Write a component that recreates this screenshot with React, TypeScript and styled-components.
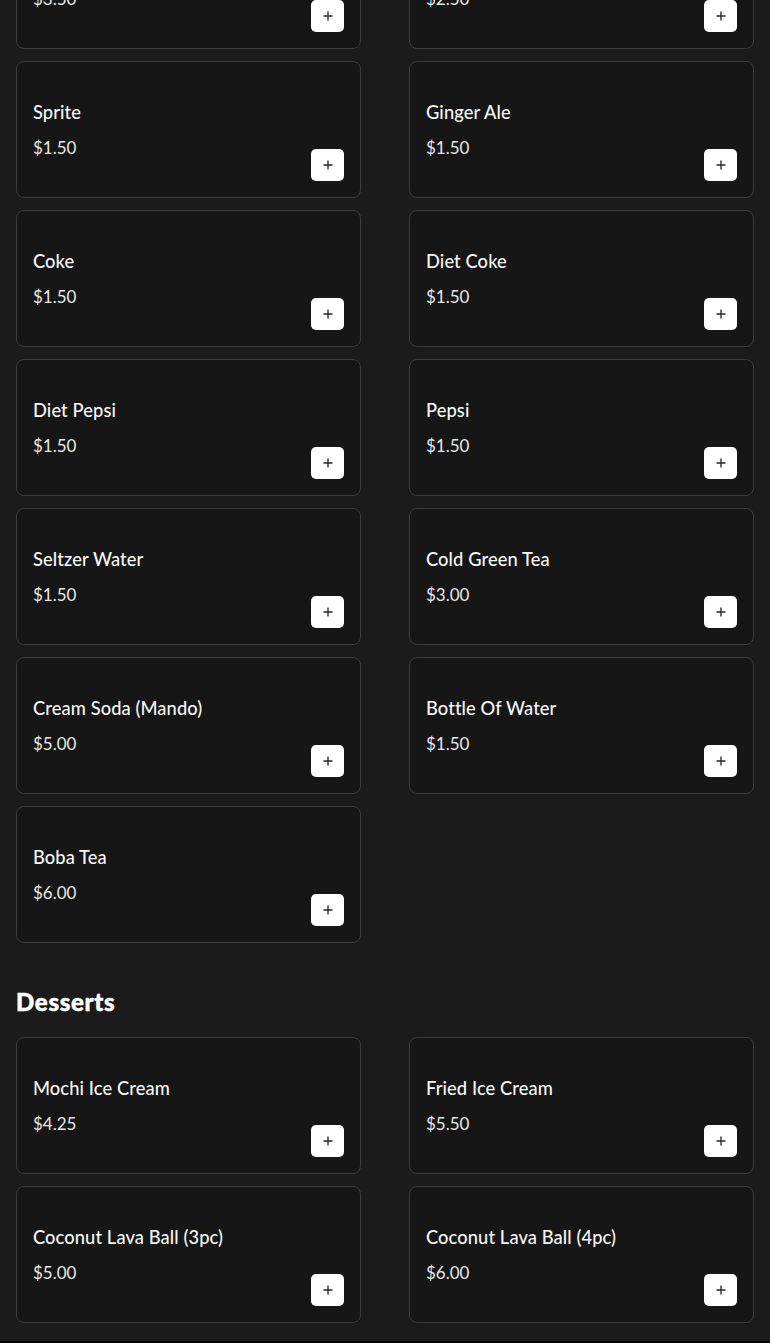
import React from "react";
import styled, { createGlobalStyle } from "styled-components";

const GlobalStyle = createGlobalStyle`
  html, body { margin: 0; padding: 0; background: #000; }
  body { font-family: "Lato", "Liberation Sans", sans-serif; color: #f4f4f4; overflow: hidden; }
  * { box-sizing: border-box; }
`;

const Page = styled.main`
  background: #1b1b1b;
  padding: 0 16px 18px;
  margin-top: -88px;
`;

const Section = styled.section`
  display: flex;
  flex-direction: column;
`;

const Heading = styled.h2`
  margin: 44px 0 21px;
  font-family: "Lato", sans-serif;
  font-weight: 900;
  font-size: 24px;
  line-height: 29px;
  letter-spacing: 0.7px;
  color: #ffffff;
  -webkit-text-stroke: 0.5px #ffffff;
`;

const Grid = styled.div`
  display: grid;
  grid-template-columns: 345px 345px;
  column-gap: 48px;
  row-gap: 12px;
`;

const Card = styled.article`
  height: 137px;
  background: #161616;
  border: 1px solid #3d3d3d;
  border-radius: 8px;
  padding: 16px;
  display: flex;
  align-items: flex-end;
  justify-content: space-between;
`;

const Info = styled.div`
  align-self: flex-start;
  padding-top: 23px;
  display: flex;
  flex-direction: column;
  gap: 13.6px;
`;

const Name = styled.div`
  font-size: 18.3px;
  font-weight: 500;
  line-height: normal;
  letter-spacing: 0.1px;
  color: #f7f7f7;
`;

const Price = styled.div`
  font-size: 17px;
  font-weight: 400;
  line-height: normal;
  color: #e8e8e8;
`;

const AddButton = styled.button`
  width: 33px;
  height: 32px;
  border: none;
  border-radius: 5px;
  background: #ffffff;
  display: flex;
  align-items: center;
  justify-content: center;
  padding: 0;
  cursor: pointer;
`;

type Item = { name: string; price: string };

const drinks: Item[] = [
  { name: "Thai Iced Tea", price: "$3.50" },
  { name: "Lemonade", price: "$2.50" },
  { name: "Sprite", price: "$1.50" },
  { name: "Ginger Ale", price: "$1.50" },
  { name: "Coke", price: "$1.50" },
  { name: "Diet Coke", price: "$1.50" },
  { name: "Diet Pepsi", price: "$1.50" },
  { name: "Pepsi", price: "$1.50" },
  { name: "Seltzer Water", price: "$1.50" },
  { name: "Cold Green Tea", price: "$3.00" },
  { name: "Cream Soda (Mando)", price: "$5.00" },
  { name: "Bottle Of Water", price: "$1.50" },
  { name: "Boba Tea", price: "$6.00" },
];

const desserts: Item[] = [
  { name: "Mochi Ice Cream", price: "$4.25" },
  { name: "Fried Ice Cream", price: "$5.50" },
  { name: "Coconut Lava Ball (3pc)", price: "$5.00" },
  { name: "Coconut Lava Ball (4pc)", price: "$6.00" },
];

function PlusIcon() {
  return (
    <svg width="10" height="10" viewBox="0 0 10 10" aria-hidden="true">
      <path d="M5 0.5v9M0.5 5h9" stroke="#262626" strokeWidth="1.35" />
    </svg>
  );
}

function MenuCard({ item }: { item: Item }) {
  return (
    <Card>
      <Info>
        <Name>{item.name}</Name>
        <Price>{item.price}</Price>
      </Info>
      <AddButton aria-label={`Add ${item.name}`}>
        <PlusIcon />
      </AddButton>
    </Card>
  );
}

export default function App() {
  return (
    <>
      <GlobalStyle />
      <Page>
        <Section>
          <Grid>
            {drinks.map((d) => (
              <MenuCard key={d.name} item={d} />
            ))}
          </Grid>
        </Section>
        <Section>
          <Heading>Desserts</Heading>
          <Grid>
            {desserts.map((d) => (
              <MenuCard key={d.name} item={d} />
            ))}
          </Grid>
        </Section>
      </Page>
    </>
  );
}
